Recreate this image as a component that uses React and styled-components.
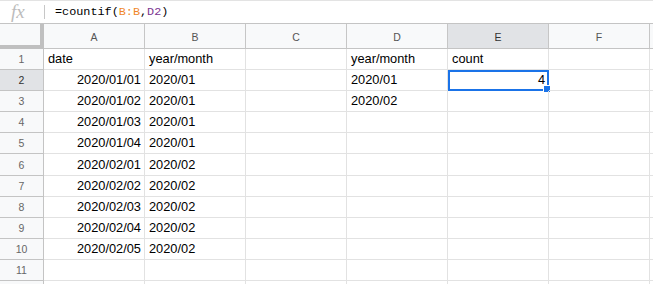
import React from 'react'
import styled, { createGlobalStyle } from 'styled-components'

const GlobalStyle = createGlobalStyle`
  html, body {
    margin: 0;
    padding: 0;
    background: #fff;
    overflow: hidden;
  }
  body {
    font-family: 'Liberation Sans', Arial, sans-serif;
  }
`

const Page = styled.div`
  width: 653px;
  height: 284px;
  overflow: hidden;
  background: #fff;
`

const FormulaBar = styled.div`
  display: flex;
  align-items: center;
  height: 23px;
  box-sizing: border-box;
  border-top: 1px solid #e3e3e3;
`

const Fx = styled.div`
  width: 44px;
  padding-left: 11px;
  box-sizing: border-box;
  font-family: 'Liberation Serif', 'Times New Roman', serif;
  font-style: italic;
  font-size: 19px;
  line-height: 20px;
  color: #bcbcbc;
`

const Divider = styled.div`
  width: 1px;
  height: 14px;
  background: #c7c7c7;
`

const Formula = styled.div`
  margin-left: 10px;
  font-family: 'Liberation Mono', 'Courier New', monospace;
  font-size: 11.8px;
  color: #000;
  white-space: pre;
`

const Ref = styled.span`
  color: ${(p) => p.$color};
`

const Grid = styled.div`
  display: grid;
  grid-template-columns: 44px repeat(6, 101px) 1fr;
  grid-template-rows: 25px;
  grid-auto-rows: 21.1px;
  border-top: 1px solid #c4c4c4;
`

const Corner = styled.div`
  background: #f8f9fa;
  border-right: 4px solid #c0c0c0;
  border-bottom: 4px solid #c0c0c0;
  box-sizing: border-box;
`

const ColHead = styled.div`
  display: flex;
  align-items: center;
  justify-content: center;
  background: ${(p) => (p.$active ? '#e1e3e6' : '#f8f9fa')};
  border-right: 1px solid #c6c6c6;
  border-bottom: 1px solid #c4c4c4;
  box-sizing: border-box;
  font-size: 10.5px;
  color: ${(p) => (p.$active ? '#333' : '#555')};
  padding-top: 1px;
`

const RowHead = styled.div`
  display: flex;
  align-items: center;
  justify-content: center;
  background: ${(p) => (p.$active ? '#e1e3e6' : '#f8f9fa')};
  border-right: 1px solid #c4c4c4;
  border-bottom: 1px solid #c4c4c4;
  box-sizing: border-box;
  font-size: 10.5px;
  color: ${(p) => (p.$active ? '#333' : '#666')};
`

const Cell = styled.div`
  position: relative;
  display: flex;
  align-items: flex-end;
  justify-content: ${(p) => (p.$right ? 'flex-end' : 'flex-start')};
  padding: 0 3px 3px 4px;
  border-right: 1px solid #e2e2e2;
  border-bottom: 1px solid #e2e2e2;
  box-sizing: border-box;
  font-size: 12.8px;
  line-height: 15px;
  color: #000;
  white-space: nowrap;
`

const Selection = styled.div`
  position: absolute;
  top: 0;
  left: 0;
  right: -1px;
  bottom: -1px;
  border: 2px solid #1a73e8;
  pointer-events: none;
`

const Handle = styled.div`
  position: absolute;
  right: -4px;
  bottom: -4px;
  width: 6px;
  height: 6px;
  background: #1a73e8;
  border: 1px solid #fff;
`

const columns = ['A', 'B', 'C', 'D', 'E', 'F', '']

const rows = [
  { A: 'date', B: 'year/month', D: 'year/month', E: 'count' },
  { A: '2020/01/01', B: '2020/01', D: '2020/01', E: '4' },
  { A: '2020/01/02', B: '2020/01', D: '2020/02' },
  { A: '2020/01/03', B: '2020/01' },
  { A: '2020/01/04', B: '2020/01' },
  { A: '2020/02/01', B: '2020/02' },
  { A: '2020/02/02', B: '2020/02' },
  { A: '2020/02/03', B: '2020/02' },
  { A: '2020/02/04', B: '2020/02' },
  { A: '2020/02/05', B: '2020/02' },
  {},
  {},
]

// full dates and plain numbers go right, "yyyy/mm" stays as text
const isNumber = (v) => /^[\d/]+$/.test(v) && v.split('/').length !== 2

export default function App() {
  return (
    <Page>
      <GlobalStyle />
      <FormulaBar>
        <Fx>fx</Fx>
        <Divider />
        <Formula>
          =countif(<Ref $color='#f0872a'>B:B</Ref>,<Ref $color='#7b3591'>D2</Ref>)
        </Formula>
      </FormulaBar>
      <Grid>
        <Corner />
        {columns.map((c, i) => (
          <ColHead key={i} $active={c === 'E'}>
            {c}
          </ColHead>
        ))}
        {rows.map((row, r) => (
          <React.Fragment key={r}>
            {/* last row only peeks in at the bottom edge, its number is off screen */}
            <RowHead $active={r === 1}>{r < 11 ? r + 1 : ''}</RowHead>
            {columns.map((c, i) => {
              const v = row[c] || ''
              const selected = c === 'E' && r === 1
              return (
                <Cell key={i} $right={v && isNumber(v)}>
                  {v}
                  {selected && (
                    <Selection>
                      <Handle />
                    </Selection>
                  )}
                </Cell>
              )
            })}
          </React.Fragment>
        ))}
      </Grid>
    </Page>
  )
}
